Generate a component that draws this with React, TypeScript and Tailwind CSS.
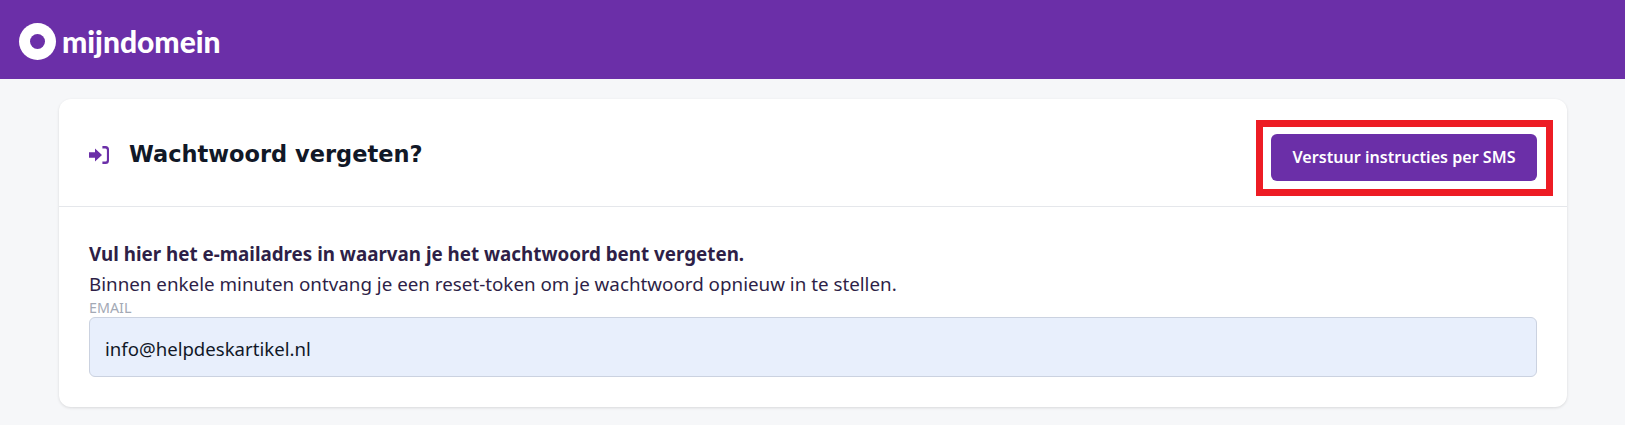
export default function App() {
  return (
    <div className="h-[425px] overflow-hidden bg-[#f6f7f9] font-['Noto_Sans','Open_Sans',sans-serif]">
      <header className="flex h-[79px] items-center bg-[#6b2fa8] pt-[3px] pl-[19px]">
        <div className="flex h-[37px] w-[37px] items-center justify-center rounded-full bg-white">
          <div className="h-[15px] w-[15px] rounded-full bg-[#6b2fa8]" />
        </div>
        <span className="ml-[6px] font-['Lato',sans-serif] text-[30px] leading-none font-black text-white">
          mijndomein
        </span>
      </header>

      <main className="mt-5 mr-[58px] ml-[59px] rounded-xl bg-white shadow-[0_1px_3px_rgba(0,0,0,0.12)]">
        <div className="flex h-[108px] items-center justify-between border-b border-[#e5e7eb] pr-[14px] pl-[30px]">
          <div className="mt-[4px] flex items-center">
            <svg width="20" height="18" viewBox="0 0 20 18" className="text-[#6b2fa8]" fill="currentColor">
              <path d="M0 6.3h6V2.4L13 9l-7 6.6v-3.9H0z" />
              <path d="M13.4 0h3.1A3.5 3.5 0 0 1 20 3.5v11a3.5 3.5 0 0 1-3.5 3.5h-3.1v-2.5h3a1.5 1.5 0 0 0 1.5-1.5V4a1.5 1.5 0 0 0-1.5-1.5h-3z" />
            </svg>
            <h1 className="ml-[20px] font-['DejaVu_Sans',sans-serif] text-[22.5px] font-bold text-[#111827]">
              Wachtwoord vergeten?
            </h1>
          </div>
          <div className="mt-[10px] border-[7px] border-[#ed1c24] pt-[7px] pr-[9px] pb-[8px] pl-[8px]">
            <button className="h-[47px] w-[266px] rounded-md bg-[#6b2fa8] text-[16.1px] font-semibold text-white">
              Verstuur instructies per SMS
            </button>
          </div>
        </div>

        <div className="px-[30px] pt-[32px] pb-[30px] text-[#2e1f47]">
          <p className="text-[18.8px] leading-[30px] font-bold">
            Vul hier het e-mailadres in waarvan je het wachtwoord bent vergeten.
          </p>
          <p className="text-[18.8px] leading-[30px] font-normal">
            Binnen enkele minuten ontvang je een reset-token om je wachtwoord opnieuw in te stellen.
          </p>
          <label className="block text-[14.3px] leading-[18px] text-[#a3a9b5]">EMAIL</label>
          <input
            readOnly
            value="info@helpdeskartikel.nl"
            className="h-[60px] w-full rounded-md border border-[#cbd2e0] bg-[#e8effc] px-[15px] pt-[3px] text-[18.6px] text-[#111827] outline-none"
          />
        </div>
      </main>
    </div>
  );
}
